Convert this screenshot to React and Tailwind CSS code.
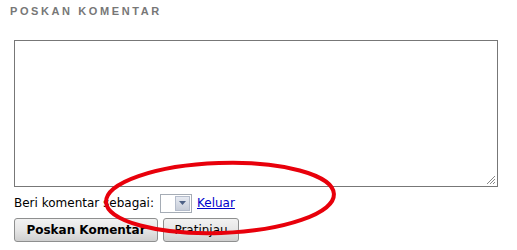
import React from "react";

const App = () => {
  return (
    <div className="relative w-[517px] h-[250px] bg-white overflow-hidden">
      <div className="pl-[10px] pt-[4px]">
        <h4 className="text-[11px] font-bold tracking-[2.6px] text-[#777] leading-[14px] font-['Liberation_Sans',Arial,sans-serif]">
          POSKAN KOMENTAR
        </h4>
      </div>

      <div className="pl-[14px] pt-[22px] w-[498px]">
        <div className="relative">
          <textarea className="block w-[484px] h-[147px] border border-[#777] bg-white resize-none outline-none" />
          {/* resize grip */}
          <svg className="absolute right-[2px] bottom-[2px]" width="11" height="11" viewBox="0 0 11 11">
            <path d="M10 2 L2 10 M10 5 L5 10 M10 8 L8 10" stroke="#888" strokeWidth="1" />
          </svg>
        </div>

        <div className="flex items-center mt-[7px] h-[18px] text-[12px] font-['DejaVu_Sans',Tahoma,sans-serif] text-black">
          <span>Beri komentar sebagai:</span>
          <div className="ml-[6px] flex h-[19px] w-[32px] border border-[#a5acb5] bg-white">
            <div className="flex-1" />
            <div className="w-[15px] m-[1px] bg-gradient-to-b from-[#e6eaf2] to-[#c7cdd8] border border-[#b4bccb] flex items-center justify-center">
              <svg width="7" height="4" viewBox="0 0 7 4">
                <path d="M0 0 H7 L3.5 4 Z" fill="#4d6185" />
              </svg>
            </div>
          </div>
          <a href="#" className="ml-[5px] text-[#0000cc] underline">Keluar</a>
        </div>

        <div className="flex gap-[5px] mt-[6px] font-['DejaVu_Sans',Tahoma,sans-serif]">
          <button className="h-[24px] w-[144px] rounded-[3px] border border-[#8e8f8f] bg-gradient-to-b from-[#f2f2f2] via-[#e6e6e6] to-[#cfcfcf] text-[12px] font-bold text-black">
            Poskan Komentar
          </button>
          <button className="h-[24px] w-[76px] rounded-[3px] border border-[#8e8f8f] bg-gradient-to-b from-[#f2f2f2] via-[#e6e6e6] to-[#cfcfcf] text-[12px] text-black">
            Pratinjau
          </button>
        </div>
      </div>

      {/* hand-drawn red annotation */}
      <svg className="absolute left-0 top-0 pointer-events-none" width="517" height="250" viewBox="0 0 517 250">
        <ellipse cx="220" cy="198" rx="114" ry="35" fill="none" stroke="#e8000b" strokeWidth="4" transform="rotate(-2 220 198)" />
      </svg>
    </div>
  );
};

export default App;
